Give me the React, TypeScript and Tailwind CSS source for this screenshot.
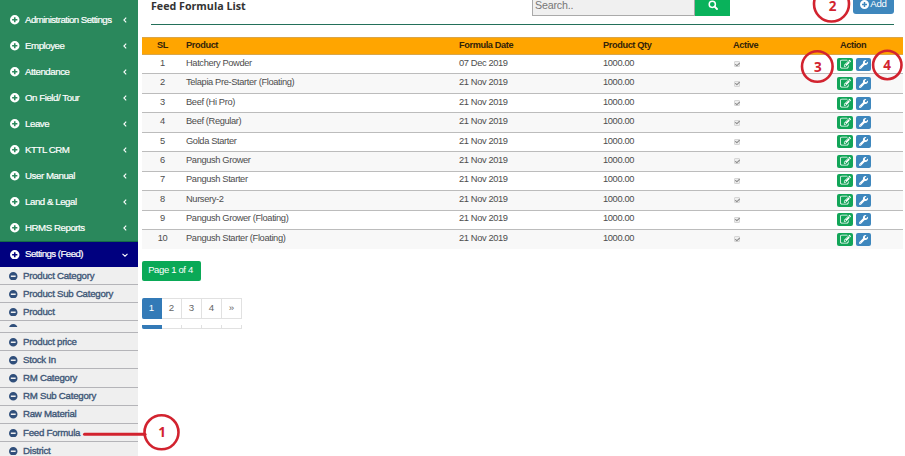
import React from "react";
import { FaCheck, FaWrench } from "react-icons/fa";

const menu = [
  "Administration Settings",
  "Employee",
  "Attendance",
  "On Field/ Tour",
  "Leave",
  "KTTL CRM",
  "User Manual",
  "Land & Legal",
  "HRMS Reports",
];
const subTop = ["Product Category", "Product Sub Category", "Product"];
const subBottom = ["Product price", "Stock In", "RM Category", "RM Sub Category", "Raw Material", "Feed Formula", "District"];
const products = [
  "Hatchery Powder",
  "Telapia Pre-Starter (Floating)",
  "Beef (Hi Pro)",
  "Beef (Regular)",
  "Golda Starter",
  "Pangush Grower",
  "Pangush Starter",
  "Nursery-2",
  "Pangush Grower (Floating)",
  "Pangush Starter (Floating)",
];
const cols = "grid grid-cols-[44px_273px_144px_130px_93px_77px]";

function EditIcon() {
  return (
    <svg viewBox="0 0 1792 1792" className="h-[11px] w-[11px] fill-white">
      <path d="M888 1184l116-116-152-152-116 116v56h96v96h56zm440-720q-16-16-33 1L945 815q-17 17-1 33t33-1l350-350q17-17 1-33zm80 594v190q0 119-84.500 203.500T1120 1536H288q-119 0-203.500-84.500T0 1248V416q0-119 84.500-203.500T288 128h832q63 0 117 25 15 7 18 23 3 17-9 29l-49 49q-14 14-32 8-23-6-45-6H288q-66 0-113 47t-47 113v832q0 66 47 113t113 47h832q66 0 113-47t47-113v-126q0-13 9-22l64-64q15-15 35-7t20 29zm-96-738l288 288-672 672H640V992zm444 132l-92 92-288-288 92-92q28-28 68-28t68 28l152 152q28 28 28 68t-28 68z" />
    </svg>
  );
}

function PlusIcon({ className }: { className: string }) {
  return (
    <svg viewBox="0 0 12 12" className={className}>
      <path fill="currentColor" fillRule="evenodd" d="M6 0a6 6 0 1 1 0 12A6 6 0 0 1 6 0ZM5 2.700V5H2.700V7H5V9.300H7V7H9.300V5H7V2.700Z" />
    </svg>
  );
}

function MinusIcon({ className }: { className: string }) {
  return (
    <svg viewBox="0 0 12 12" className={className}>
      <path fill="currentColor" fillRule="evenodd" d="M6 0a6 6 0 1 1 0 12A6 6 0 0 1 6 0ZM2.600 4.900V7.100H9.400V4.900Z" />
    </svg>
  );
}

function Chevron({ down }: { down?: boolean }) {
  return (
    <svg viewBox="0 0 8 8" className="h-[8px] w-[8px] shrink-0" fill="none" stroke="white" strokeWidth="1.100">
      <path d={down ? "M1.500 2.800L4 5.200L6.500 2.800" : "M5.200 1.600L2.900 4L5.200 6.400"} />
    </svg>
  );
}

function MenuItem({ label, open }: { label: string; open?: boolean }) {
  return (
    <div className={"flex shrink-0 items-center pr-[9px] pl-[10px] text-[9.7px] text-white " + (open ? "h-[25px] bg-[#00007f] tracking-[-0.55px]" : "h-[26px] tracking-[-0.55px]")}>
      <PlusIcon className="mr-[5.500px] h-[9.500px] w-[9.500px] shrink-0" />
      <span className={"flex-1 whitespace-nowrap [-webkit-text-stroke:0.2px_white] " + (open ? "tracking-[-0.55px]" : "")}>
        <span className={open ? "tracking-[-0.55px]" : label.length < 15 ? "tracking-[-0.45px]" : ""}>{label}</span>
      </span>
      <Chevron down={open} />
    </div>
  );
}

function SubItem({ label }: { label: string }) {
  return (
    <div className="flex h-[18.100px] shrink-0 items-center border-b border-[#b4b4b8] pt-px pl-[9px] text-[9.7px] tracking-[-0.26px] text-[#405777]">
      <MinusIcon className="mr-[5.500px] h-[8.500px] w-[8.500px] shrink-0 text-[#304f7b]" />
      <span className="whitespace-nowrap [-webkit-text-stroke:0.35px_#405777]">{label}</span>
    </div>
  );
}

export default function App() {
  return (
    <div className="relative flex h-[456px] w-[905px] overflow-hidden bg-white font-['Liberation_Sans',Arial,sans-serif]">
      <aside className="flex w-[138px] shrink-0 flex-col overflow-hidden bg-[#efefef]">
        <div className="h-[242px] shrink-0 border-b border-[#146b46] bg-[#2a885c] pt-[7px]">
          {menu.map((label) => (
            <MenuItem key={label} label={label} />
          ))}
        </div>
        <MenuItem label="Settings (Feed)" open />
        <div className="shrink-0">
          {subTop.map((s) => <SubItem key={s} label={s} />)}
          <div className="flex h-[12px] items-start border-b border-[#b4b4b8] pt-[3px] pl-[9px]">
            <div className="h-[3px] overflow-hidden">
              <MinusIcon className="h-[8.500px] w-[8.500px] text-[#304f7b]" />
            </div>
          </div>
          {subBottom.map((s) => <SubItem key={s} label={s} />)}
        </div>
      </aside>

      <main className="ml-[4px] w-[761px] shrink-0">
        <header className="ml-[9px] flex h-[25px] w-[743px] items-start border-b border-[#23705a]">
          <h1 className="mt-[-1px] w-[381px] whitespace-nowrap font-['Open_Sans',sans-serif] text-[10.7px] leading-[14px] font-bold text-[#333]">Feed Formula List</h1>
          <div className="flex h-[16px] w-[163px] items-center border-x border-b border-[#aaa] bg-[#f0f0f0] pb-[5px] pl-[2px] text-[10.7px] tracking-[-0.2px] text-[#777]">Search..</div>
          <div className="flex h-[16px] w-[35px] items-center justify-center bg-[#09b25b] pb-[6px] text-white">
            <svg viewBox="0 0 10 10" className="h-[10px] w-[10px]" fill="none" stroke="currentColor">
              <circle cx="4.300" cy="4.300" r="3.100" strokeWidth="1.500" />
              <path d="M6.700 6.700L9 9" strokeWidth="1.900" strokeLinecap="round" />
            </svg>
          </div>
          <button className="ml-auto flex h-[14px] w-[41px] items-center justify-center gap-px rounded-b-[3px] bg-[#3e87bd] pb-[6px] text-[9.7px] tracking-[-0.2px] text-white">
            <PlusIcon className="h-[9px] w-[9px]" />
            <span className="leading-[8px]">Add</span>
          </button>
        </header>

        <section className="mt-[12px]">
          <div className={cols + " h-[18px] items-center border-y border-[#d9a64a] bg-[#ffa500] pb-px text-[9.2px] font-bold tracking-[-0.38px] text-[#33230a]"}>
            <span className="pl-[15px]">SL</span><span>Product</span><span>Formula Date</span><span>Product Qty</span><span>Active</span><span className="pl-[14px]">Action</span>
          </div>
          {products.map((p, i) => (
            <div key={p} className={cols + " h-[19.45px] items-center border-b border-[#bcbcbc] text-[9.3px] tracking-[-0.37px] text-[#4d4d4d] last:border-transparent even:bg-white odd:bg-[#f8f8f8]"}>
              <span className="pr-[3px] pb-px text-center">{i + 1}</span>
              <span className="pb-px whitespace-nowrap">{p}</span>
              <span className="pb-px">{i === 0 ? "07 Dec 2019" : "21 Nov 2019"}</span>
              <span className="pb-px">1000.00</span>
              <span className="ml-px flex h-[6px] w-[6px] items-center justify-center rounded-[1px] border border-[#d6d6d6] bg-[#eee]">
                <FaCheck className="h-[5px] w-[5px] shrink-0 text-[#888]" />
              </span>
              <span className="flex gap-[3px] pl-[11px]">
                <span className="flex h-[13px] w-[16px] items-center justify-center rounded-[2px] bg-[#12a558] pl-px"><EditIcon /></span>
                <span className="flex h-[13px] w-[15px] items-center justify-center rounded-[2px] bg-[#3e87bd] text-white"><FaWrench className="h-[9px] w-[9px]" /></span>
              </span>
            </div>
          ))}
        </section>

        <div className="mt-[12px] flex h-[20px] w-[59px] items-center justify-center rounded-[2px] bg-[#0aa957] pr-[2px] pb-[2px] text-[9.5px] tracking-[-0.35px] whitespace-nowrap text-white">Page 1 of 4</div>
        <nav className="mt-[17px] flex h-[21px] w-[100px] text-[9.7px] text-[#666]">
          {["1", "2", "3", "4", "»"].map((p, i) => (
            <span key={p} className={"flex w-[20px] items-center justify-center border-y border-r pb-px " + (i === 0 ? "rounded-l-[2px] border-[#337ab7] bg-[#337ab7] text-white" : "border-[#e1e1e1]")}>{p}</span>
          ))}
        </nav>
        <div className="mt-[6px] flex h-[4px] w-[100px]">
          {[0, 1, 2, 3, 4].map((i) => (
            <span key={i} className={"w-[20px] border-r border-b " + (i === 0 ? "rounded-bl-[2px] border-[#337ab7] bg-[#337ab7]" : "border-[#e1e1e1]")} />
          ))}
        </div>
      </main>

      <svg className="pointer-events-none absolute inset-0 h-[456px] w-[905px]" fill="none" stroke="#d2232f" strokeWidth="2.600">
        <path d="M84.500 434.200H145" strokeWidth="3" strokeLinecap="round" />
        <circle cx="161.500" cy="432.300" r="17" />
        <circle cx="831.500" cy="4" r="17.500" />
        <circle cx="817.300" cy="66.500" r="15.300" />
        <circle cx="887.300" cy="65" r="14.200" />
        <g fill="#d2232f" stroke="none" fontFamily="Open Sans, sans-serif" fontWeight="700" fontSize="13.500" textAnchor="middle">
          <text x="162" y="437">1</text>
          <text x="832.500" y="11">2</text>
          <text x="817.800" y="72">3</text>
          <text x="887" y="69.500">4</text>
        </g>
      </svg>
    </div>
  );
}
